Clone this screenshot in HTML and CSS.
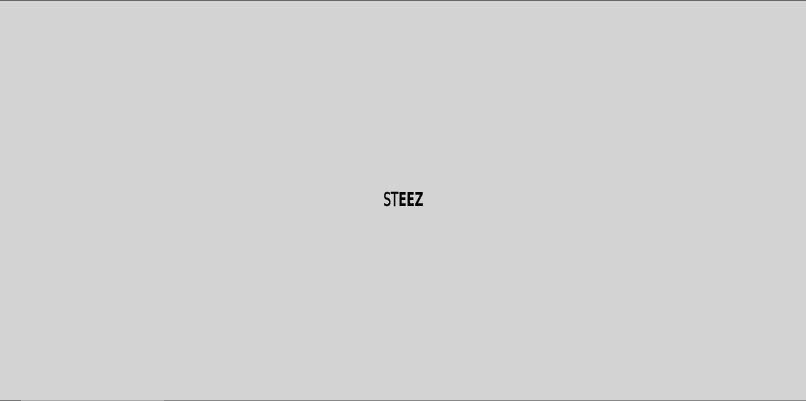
FILE: index.html
```html
<!DOCTYPE html>
<html lang="en">
<head>
<meta charset="utf-8">
<title>STEEZ</title>
<link rel="stylesheet" href="styles.css">
</head>
<body>
<div class="loader">
  <div class="logo"><span class="mark"><span class="thin">ST</span>EEZ</span></div>
  <div class="progress"><div class="seg dark-a"></div><div class="seg light"></div><div class="seg dark-b"></div></div>
</div>
</body>
</html>
```

FILE: styles.css
```css
html, body { margin: 0; height: 100%; }
body { overflow: hidden; }
.loader {
  height: 100vh;
  box-sizing: border-box;
  background: #d3d3d3;
  border-top: 1px solid #666;
  display: flex;
  flex-direction: column;
}
.logo {
  flex: 1;
  display: flex;
  align-items: center;
  justify-content: center;
  padding-bottom: 3px;
}
.mark {
  display: block;
  font: bold 20px/1 "DejaVu Sans", sans-serif;
  color: #000;
  transform: scaleX(.6);
  will-change: transform;
}
.thin {
  font-weight: normal;
  -webkit-text-stroke: .5px #000;
}
.progress { display: flex; height: 1px; }
.seg.dark-a { width: 21px; background: #777; }
.seg.light { width: 143px; background: #aaa; }
.seg.dark-b { flex: 1; background: #888; }
```
